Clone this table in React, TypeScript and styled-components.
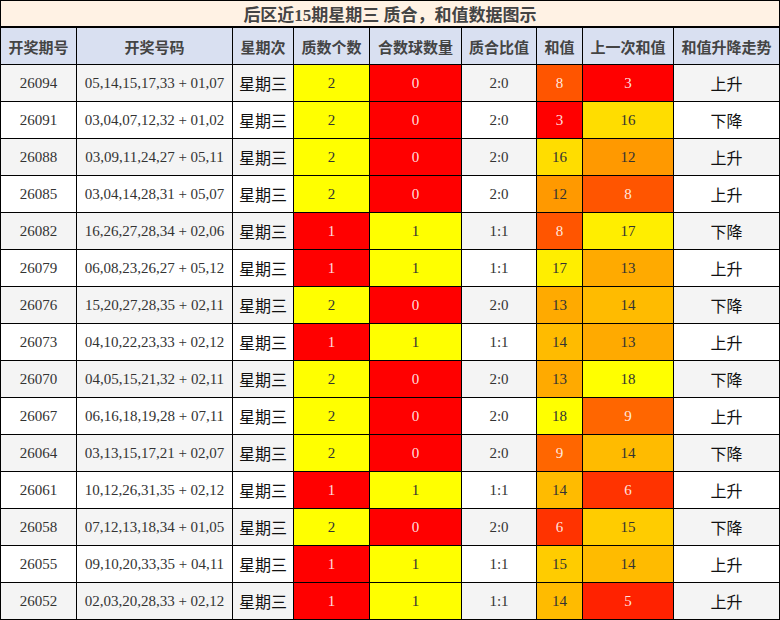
import React from "react";
import styled, { createGlobalStyle } from "styled-components";

const GlobalStyle = createGlobalStyle`
  html, body { margin: 0; padding: 0; background: #ffffff; }
  body { font-family: "Liberation Serif", "Noto Sans CJK SC", serif; }
`;

const COLS = "75px 155px 60px 75px 91px 74px 45px 90px 105px";

const Frame = styled.div`
  width: 780px;
  box-sizing: border-box;
  background: #000;
  padding: 1px;
  display: flex;
  flex-direction: column;
`;

const Title = styled.div`
  height: 25px;
  margin-bottom: 2px;
  background: #fff2e4;
  color: #444;
  font-weight: bold;
  font-size: 17px;
  display: flex;
  align-items: center;
  justify-content: center;
  font-family: "Liberation Serif", "Noto Sans CJK SC", serif;
`;

const Table = styled.div`
  display: flex;
  flex-direction: column;
  gap: 1px;
`;

const Row = styled.div`
  display: grid;
  grid-template-columns: ${COLS};
  grid-auto-rows: 36px;
  gap: 1px;
`;

const HeadCell = styled.div`
  background: #d9e0f1;
  color: #444;
  font-weight: bold;
  font-size: 15px;
  display: flex;
  align-items: center;
  justify-content: center;
  white-space: nowrap;
`;

const Cell = styled.div<{ $bg: string; $fg: string }>`
  background: ${(p) => p.$bg};
  color: ${(p) => p.$fg};
  font-size: 15px;
  display: flex;
  align-items: center;
  justify-content: center;
  white-space: nowrap;
`;

const CjkCell = styled(Cell)`
  font-size: 16px;
  color: #111;
`;

type Rec = [string, string, number, number, string, number, number, string];

const data: Rec[] = [
  ["26094", "05,14,15,17,33 + 01,07", 2, 0, "2:0", 8, 3, "上升"],
  ["26091", "03,04,07,12,32 + 01,02", 2, 0, "2:0", 3, 16, "下降"],
  ["26088", "03,09,11,24,27 + 05,11", 2, 0, "2:0", 16, 12, "上升"],
  ["26085", "03,04,14,28,31 + 05,07", 2, 0, "2:0", 12, 8, "上升"],
  ["26082", "16,26,27,28,34 + 02,06", 1, 1, "1:1", 8, 17, "下降"],
  ["26079", "06,08,23,26,27 + 05,12", 1, 1, "1:1", 17, 13, "上升"],
  ["26076", "15,20,27,28,35 + 02,11", 2, 0, "2:0", 13, 14, "下降"],
  ["26073", "04,10,22,23,33 + 02,12", 1, 1, "1:1", 14, 13, "上升"],
  ["26070", "04,05,15,21,32 + 02,11", 2, 0, "2:0", 13, 18, "下降"],
  ["26067", "06,16,18,19,28 + 07,11", 2, 0, "2:0", 18, 9, "上升"],
  ["26064", "03,13,15,17,21 + 02,07", 2, 0, "2:0", 9, 14, "下降"],
  ["26061", "10,12,26,31,35 + 02,12", 1, 1, "1:1", 14, 6, "上升"],
  ["26058", "07,12,13,18,34 + 01,05", 2, 0, "2:0", 6, 15, "下降"],
  ["26055", "09,10,20,33,35 + 04,11", 1, 1, "1:1", 15, 14, "上升"],
  ["26052", "02,03,20,28,33 + 02,12", 1, 1, "1:1", 14, 5, "上升"],
];

const heads = ["开奖期号", "开奖号码", "星期次", "质数个数", "合数球数量", "质合比值", "和值", "上一次和值", "和值升降走势"];

const YELLOW = "#ffff00";
const RED = "#ff0000";
const DARK = "#333";
const LIGHT = "rgba(255,255,255,0.88)";

function sumColor(v: number) {
  const g = Math.max(0, Math.min(255, (v - 3) * 17));
  return `rgb(255, ${g}, 0)`;
}
function sumText(v: number) {
  return v <= 9 ? LIGHT : DARK;
}

export default function App() {
  return (
    <>
      <GlobalStyle />
      <Frame>
        <Title>后区近15期星期三 质合，和值数据图示</Title>
        <Table>
          <Row>
            {heads.map((h) => (
              <HeadCell key={h}>{h}</HeadCell>
            ))}
          </Row>
          {data.map((r, i) => {
            const base = i % 2 === 0 ? "#f4f4f4" : "#ffffff";
            const [id, nums, p, c, ratio, sum, prev, trend] = r;
            const pBg = p >= 2 ? YELLOW : RED;
            const cBg = c >= 1 ? YELLOW : RED;
            return (
              <Row key={id}>
                <Cell $bg={base} $fg={DARK}>{id}</Cell>
                <Cell $bg={base} $fg={DARK}>{nums}</Cell>
                <CjkCell $bg={base} $fg="#111">星期三</CjkCell>
                <Cell $bg={pBg} $fg={pBg === RED ? LIGHT : DARK}>{p}</Cell>
                <Cell $bg={cBg} $fg={cBg === RED ? LIGHT : DARK}>{c}</Cell>
                <Cell $bg={base} $fg={DARK}>{ratio}</Cell>
                <Cell $bg={sumColor(sum)} $fg={sumText(sum)}>{sum}</Cell>
                <Cell $bg={sumColor(prev)} $fg={sumText(prev)}>{prev}</Cell>
                <CjkCell $bg={base} $fg="#111">{trend}</CjkCell>
              </Row>
            );
          })}
        </Table>
      </Frame>
    </>
  );
}
